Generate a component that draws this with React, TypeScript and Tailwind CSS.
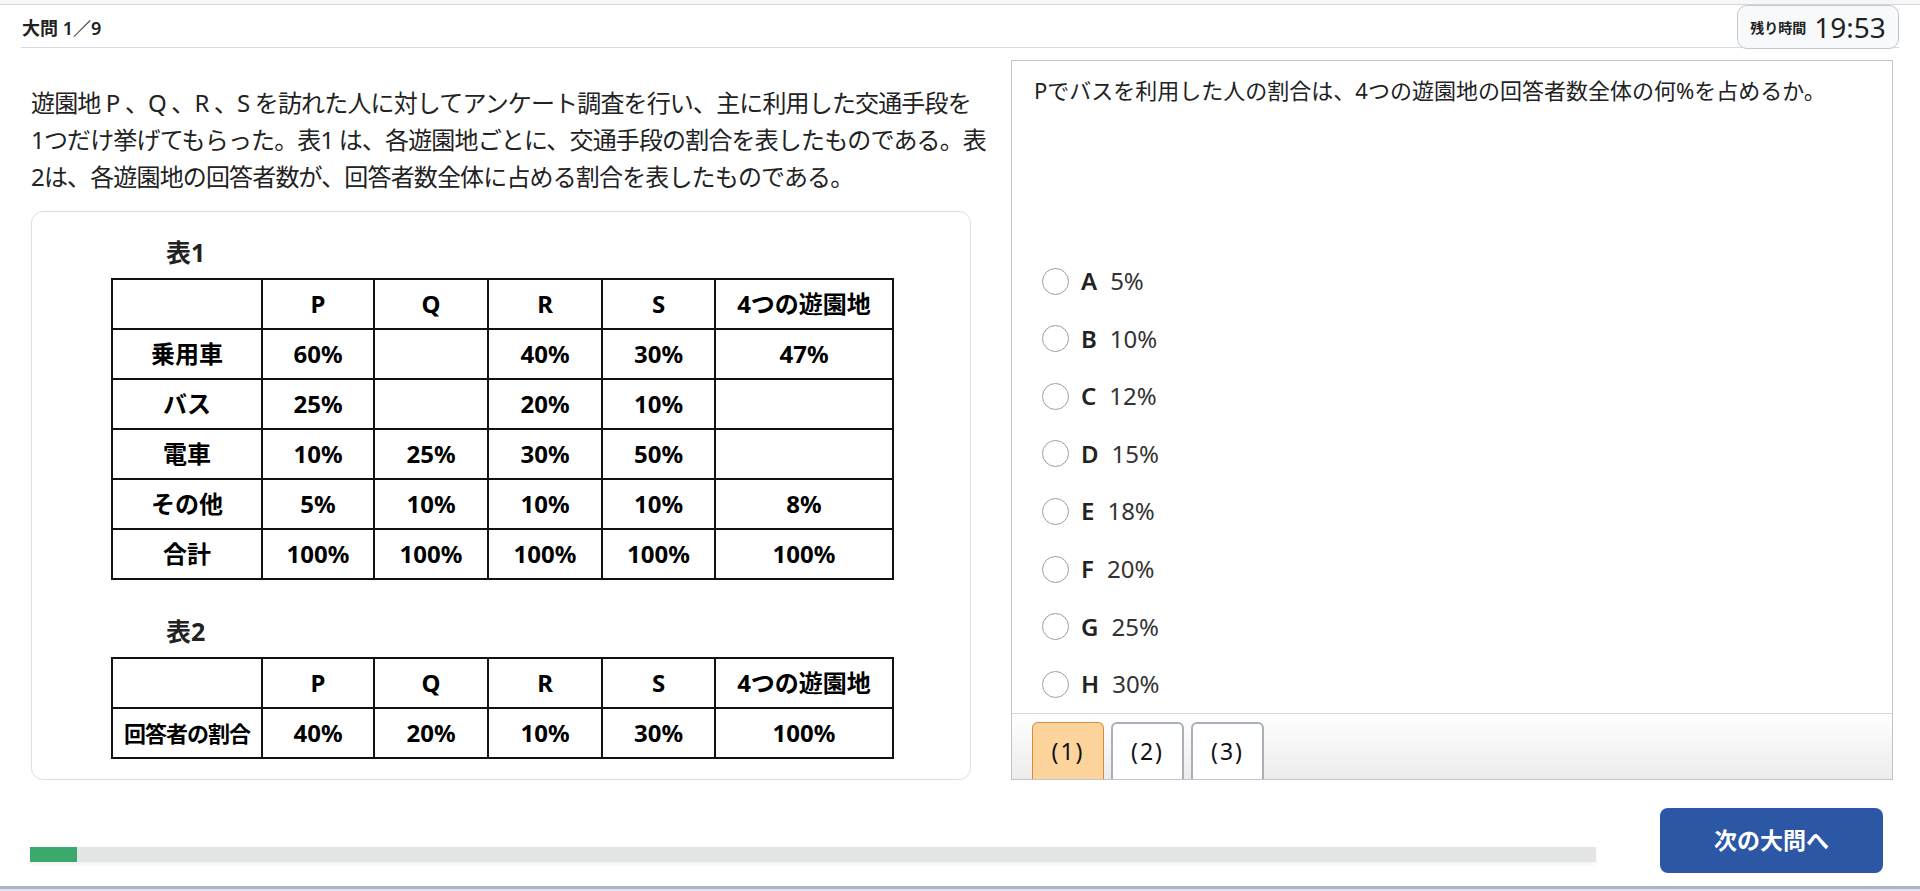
import React, { useState } from "react";

const cols = [150, 112, 114, 114, 113, 178];
const head = ["", "P", "Q", "R", "S", "4つの遊園地"];

const table1 = [
  ["乗用車", "60%", "", "40%", "30%", "47%"],
  ["バス", "25%", "", "20%", "10%", ""],
  ["電車", "10%", "25%", "30%", "50%", ""],
  ["その他", "5%", "10%", "10%", "10%", "8%"],
  ["合計", "100%", "100%", "100%", "100%", "100%"],
];

const table2 = [["回答者の割合", "40%", "20%", "10%", "30%", "100%"]];

const options = [
  ["A", "5%"],
  ["B", "10%"],
  ["C", "12%"],
  ["D", "15%"],
  ["E", "18%"],
  ["F", "20%"],
  ["G", "25%"],
  ["H", "30%"],
];

function DataTable({ rows }: { rows: string[][] }) {
  return (
    <table className="border-collapse table-fixed w-[781px] ml-[79px] text-black">
      <colgroup>
        {cols.map((w, i) => (
          <col key={i} style={{ width: w }} />
        ))}
      </colgroup>
      <tbody>
        <tr>
          {head.map((h, i) => (
            <td key={i} className="border-2 border-[#111] h-[50px] text-center text-[24px] font-bold leading-none">
              {h}
            </td>
          ))}
        </tr>
        {rows.map((r, ri) => (
          <tr key={ri}>
            {r.map((c, ci) => (
              <td
                key={ci}
                className={
                  ci === 0 && c.length > 4
                    ? "border-2 border-[#111] h-[50px] text-center text-[22px] font-bold leading-none tracking-[-1px] whitespace-nowrap"
                    : "border-2 border-[#111] h-[50px] text-center text-[24px] font-bold leading-none"
                }
              >
                {c}
              </td>
            ))}
          </tr>
        ))}
      </tbody>
    </table>
  );
}

export default function App() {
  const [selected, setSelected] = useState<string | null>(null);
  const [tab, setTab] = useState(0);

  return (
    <div className="w-[1920px] h-[891px] overflow-hidden bg-white text-[#222] font-['Noto_Sans','Noto_Sans_CJK_JP',sans-serif] flex flex-col">
      <div className="h-[5px] border-b border-[#d3d6db] bg-[#f7f7f7]" />

      {/* header */}
      <header className="mx-[21px] h-[43px] border-b border-[#d5dae3] flex items-start justify-between">
        <div className="mt-[10px] pl-[1px] text-[18px] font-semibold leading-[26px]">大問 1／9</div>
        <div className="h-[44px] w-[162px] border border-[#c3c8d0] rounded-[10px] bg-[#f7f9fb] flex items-center justify-center gap-[8px]">
          <span className="text-[14px] font-bold">残り時間</span>
          <span className="text-[28px] leading-none font-normal">19:53</span>
        </div>
      </header>

      {/* main */}
      <div className="flex gap-[40px] pl-[31px] pr-[27px] pt-[12px] h-[732px]">
        <div className="w-[940px] flex flex-col pt-[24px]">
          <p className="text-[24px] leading-[37px] whitespace-nowrap tracking-[-0.85px]">
            遊園地 P 、Q 、R 、S を訪れた人に対してアンケート調査を行い、主に利用した交通手段を
            <br />
            1つだけ挙げてもらった。表1 は、各遊園地ごとに、交通手段の割合を表したものである。表
            <br />
            2は、各遊園地の回答者数が、回答者数全体に占める割合を表したものである。
          </p>
          <div className="mt-[16px] flex-1 border border-[#dde0e5] rounded-[12px] pt-[24px]">
            <div className="ml-[134px] text-[25px] font-bold leading-[32px] mb-[10px]">表1</div>
            <DataTable rows={table1} />
            <div className="ml-[134px] text-[25px] font-bold leading-[32px] mt-[35px] mb-[10px]">表2</div>
            <DataTable rows={table2} />
          </div>
        </div>

        <div className="w-[882px] border border-[#c0c4cc] flex flex-col">
          <div className="flex-1 flex flex-col justify-between">
            <div className="pl-[22px] pt-[14px] text-[22px] leading-[30px]">
              Pでバスを利用した人の割合は、4つの遊園地の回答者数全体の何%を占めるか。
            </div>
            <div className="flex flex-col pl-[30px]">
              {options.map(([k, v]) => (
                <label key={k} className="h-[57.6px] flex items-center cursor-pointer" onClick={() => setSelected(k)}>
                  <span className="w-[27px] h-[27px] rounded-full border border-[#9b9da4] bg-white flex items-center justify-center">
                    {selected === k && <span className="w-[13px] h-[13px] rounded-full bg-[#2b57a4]" />}
                  </span>
                  <span className="ml-[12px] text-[24px] font-semibold leading-none">{k}</span>
                  <span className="ml-[13px] text-[24px] leading-none text-[#333]">{v}</span>
                </label>
              ))}
            </div>
          </div>
          <div className="h-[66px] border-t border-[#d5d8de] bg-linear-to-b from-white to-[#ececec] flex items-end gap-[7px] pl-[20px]">
            {["(1)", "(2)", "(3)"].map((t, i) => (
              <button
                key={t}
                onClick={() => setTab(i)}
                className={
                  tab === i
                    ? "w-[72px] h-[57px] rounded-t-[6px] border border-b-0 border-[#d98a3c] bg-[#fdd49c] text-[23px] tracking-[2px] leading-none text-[#111]"
                    : "w-[73px] h-[57px] rounded-t-[6px] border-2 border-b-0 border-[#a9afb8] bg-white text-[23px] tracking-[2px] leading-none text-[#111]"
                }
              >
                {t}
              </button>
            ))}
          </div>
        </div>
      </div>

      {/* footer */}
      <div className="flex items-start pl-[30px] pt-[28px] h-[106px]">
        <div className="mt-[39px] w-[1566px] h-[15px] bg-[#e3e6e5] shadow-[0_2px_4px_rgba(0,0,0,0.06)]">
          <div className="h-full bg-[#3aaa6c]" style={{ width: 47 }} />
        </div>
        <button className="ml-[64px] w-[223px] h-[65px] rounded-[8px] bg-[#2b57a4] text-white text-[23px] font-semibold">
          次の大問へ
        </button>
      </div>

      <div className="flex-1 border-t-[3px] border-[#adb5c0] bg-[#dce5f1]" />
    </div>
  );
}
